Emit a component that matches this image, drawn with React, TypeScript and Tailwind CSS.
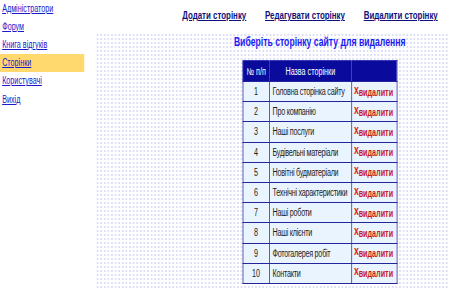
import React from 'react';

const sideLinks = ['Адміністратори', 'Форум', 'Книга відгуків', 'Сторінки', 'Користувачі', 'Вихід'];

const pages = [
  'Головна сторінка сайту',
  'Про компанію',
  'Наші послуги',
  'Будівельні матеріали',
  'Новітні будматеріали',
  'Технічні характеристики',
  'Наші роботи',
  'Наші клієнти',
  'Фотогалерея робіт',
  'Контакти',
];

// the original page is squeezed horizontally, so lay out at full width and scale x
const App: React.FC = () => {
  return (
    <div className="w-[449px] h-[288px] overflow-hidden bg-white">
      <div className="flex w-[624px] h-[288px] origin-top-left scale-x-[0.72] font-['Liberation_Sans',Arial,sans-serif]">
        <div className="w-[117px] shrink-0 -mt-[1px]">
          {sideLinks.map(l => (
            <div
              key={l}
              className={`h-[18.2px] flex items-center pl-[3px] text-[10px] ${l === 'Сторінки' ? 'bg-[#ffd96e]' : ''}`}
            >
              <a href="#" className="text-[#1a1acc] underline">{l}</a>
            </div>
          ))}
        </div>
        <div className="flex-1 ml-[16px] flex flex-col">
          <div className="h-[33px] flex items-center justify-end gap-[26px] pr-[16px] pb-[2px] text-[11px] font-bold">
            <a href="#" className="text-[#10107a] underline">Додати сторінку</a>
            <a href="#" className="text-[#10107a] underline">Редагувати сторінку</a>
            <a href="#" className="text-[#10107a] underline">Видалити сторінку</a>
          </div>
          <div className="flex-1 bg-[radial-gradient(#dcdff6_0.9px,transparent_0.9px)] bg-[size:5px_4px]">
            <div className="ml-[181px] w-[260px] flex flex-col items-center pt-[2px]">
              <h1 className="text-[12px] font-bold text-[#1a1af5] leading-[15px] whitespace-nowrap">Виберіть сторінку сайту для видалення</h1>
              <table className="mt-[10px] border-collapse border border-[#3a3ab0] text-[10px] table-fixed w-[214px]">
                <thead>
                  <tr className="bg-[#0a0a9c] text-white h-[21px]">
                    <th className="w-[37px] font-normal whitespace-nowrap">№ п/п</th>
                    <th className="w-[114px] font-normal">Назва сторінки</th>
                    <th className="w-[63px]"></th>
                  </tr>
                </thead>
                <tbody>
                  {pages.map((p, i) => (
                    <tr key={p} className="bg-[#e9f4ff] h-[20.2px]">
                      <td className="border border-[#24249c] text-center text-[#1c1c1c]">{i + 1}</td>
                      <td className="border border-[#24249c] pl-[4px] text-[#1c1c1c] whitespace-nowrap tracking-[-0.35px]">{p}</td>
                      <td className="border border-[#24249c] pl-[3px] whitespace-nowrap font-bold text-[#c81818]">
                        <span className="relative -top-[2px] text-[12px] text-[#e02020]">x</span>видалити
                      </td>
                    </tr>
                  ))}
                </tbody>
              </table>
            </div>
          </div>
        </div>
      </div>
    </div>
  );
};

export default App;
